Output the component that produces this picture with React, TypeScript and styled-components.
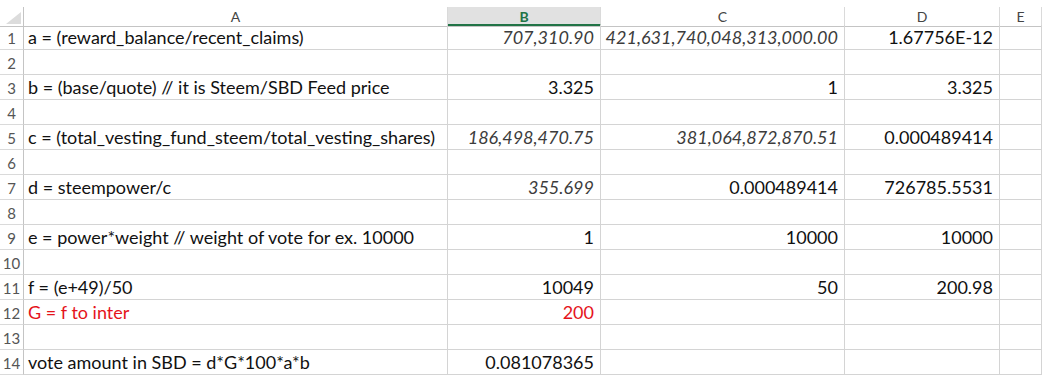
import React from 'react';
import styled, { createGlobalStyle } from 'styled-components';

const GlobalStyle = createGlobalStyle`
  html, body {
    margin: 0;
    padding: 0;
    background: #ffffff;
  }
  * {
    box-sizing: border-box;
  }
`;

type CellData = { text: string; italic?: boolean; red?: boolean };
type RowData = CellData[];

const columns = ['A', 'B', 'C', 'D', 'E'];

const rows: RowData[] = [
  [
    { text: 'a = (reward_balance/recent_claims)' },
    { text: '707,310.90', italic: true },
    { text: '421,631,740,048,313,000.00', italic: true },
    { text: '1.67756E-12' },
  ],
  [],
  [
    { text: 'b = (base/quote) // it is Steem/SBD Feed price' },
    { text: '3.325' },
    { text: '1' },
    { text: '3.325' },
  ],
  [],
  [
    { text: 'c = (total_vesting_fund_steem/total_vesting_shares)' },
    { text: '186,498,470.75', italic: true },
    { text: '381,064,872,870.51', italic: true },
    { text: '0.000489414' },
  ],
  [],
  [
    { text: 'd = steempower/c' },
    { text: '355.699', italic: true },
    { text: '0.000489414' },
    { text: '726785.5531' },
  ],
  [],
  [
    { text: 'e = power*weight // weight of vote for ex. 10000' },
    { text: '1' },
    { text: '10000' },
    { text: '10000' },
  ],
  [],
  [{ text: 'f = (e+49)/50' }, { text: '10049' }, { text: '50' }, { text: '200.98' }],
  [{ text: 'G = f to inter', red: true }, { text: '200', red: true }],
  [],
  [{ text: 'vote amount in SBD = d*G*100*a*b' }, { text: '0.081078365' }],
];

const Sheet = styled.div`
  display: grid;
  grid-template-columns: 24px 424px 153px 244px 155px 1fr;
  grid-auto-rows: 25px;
  width: 1042px;
  height: 376px;
  overflow: hidden;
  font-family: Lato, 'Liberation Sans', sans-serif;
`;

const HeaderCell = styled.div`
  height: 27px;
  padding-top: 7px;
  border-bottom: 1px solid #c4c4c4;
`;

const CornerBox = styled.div`
  height: 100%;
  border-right: 1px solid #c4c4c4;
  display: flex;
  align-items: flex-end;
  justify-content: flex-end;
  padding: 0 1px 2px 0;
`;

const HeaderLabel = styled.div<{ $active?: boolean }>`
  height: 100%;
  display: flex;
  align-items: center;
  justify-content: center;
  border-right: 1px solid #dadada;
  font-size: 14px;
  color: ${p => (p.$active ? '#217346' : '#444444')};
  font-weight: ${p => (p.$active ? 700 : 400)};
  background: ${p => (p.$active ? '#e1e1e1' : '#ffffff')};
  border-bottom: ${p => (p.$active ? '2px solid #217346' : 'none')};
  margin-bottom: ${p => (p.$active ? '-1px' : '0')};
  padding-top: ${p => (p.$active ? '1px' : '0')};
`;

const RowNumber = styled.div`
  border-right: 1px solid #c4c4c4;
  border-bottom: 1px solid #dadada;
  display: flex;
  align-items: flex-end;
  justify-content: center;
  padding-bottom: 2px;
  font-size: 15px;
  color: #555555;
`;

const Cell = styled.div<{ $align: 'left' | 'right'; $italic?: boolean; $red?: boolean }>`
  border-right: 1px solid #d4d4d4;
  border-bottom: 1px solid #d4d4d4;
  display: flex;
  align-items: flex-end;
  justify-content: ${p => (p.$align === 'right' ? 'flex-end' : 'flex-start')};
  padding: 0 6px 0 4px;
  font-size: 18px;
  line-height: 23px;
  white-space: nowrap;
  font-style: ${p => (p.$italic ? 'italic' : 'normal')};
  color: ${p => (p.$red ? '#e5131b' : p.$italic ? '#3c3c3c' : '#111111')};
`;

const SelectAll = () => (
  <svg width="16" height="12" viewBox="0 0 16 12">
    <polygon points="15,0 15,12 0,12" fill="#dcdcdc" />
  </svg>
);

export default function App() {
  return (
    <>
      <GlobalStyle />
      <Sheet>
        <HeaderCell>
          <CornerBox>
            <SelectAll />
          </CornerBox>
        </HeaderCell>
        {columns.map(c => (
          <HeaderCell key={c}>
            <HeaderLabel $active={c === 'B'}>{c}</HeaderLabel>
          </HeaderCell>
        ))}
        {rows.map((row, i) => (
          <React.Fragment key={i}>
            <RowNumber>{i + 1}</RowNumber>
            {columns.map((c, j) => {
              const cell = row[j];
              return (
                <Cell
                  key={c}
                  $align={j === 0 ? 'left' : 'right'}
                  $italic={cell?.italic}
                  $red={cell?.red}
                >
                  {cell?.text}
                </Cell>
              );
            })}
          </React.Fragment>
        ))}
      </Sheet>
    </>
  );
}
